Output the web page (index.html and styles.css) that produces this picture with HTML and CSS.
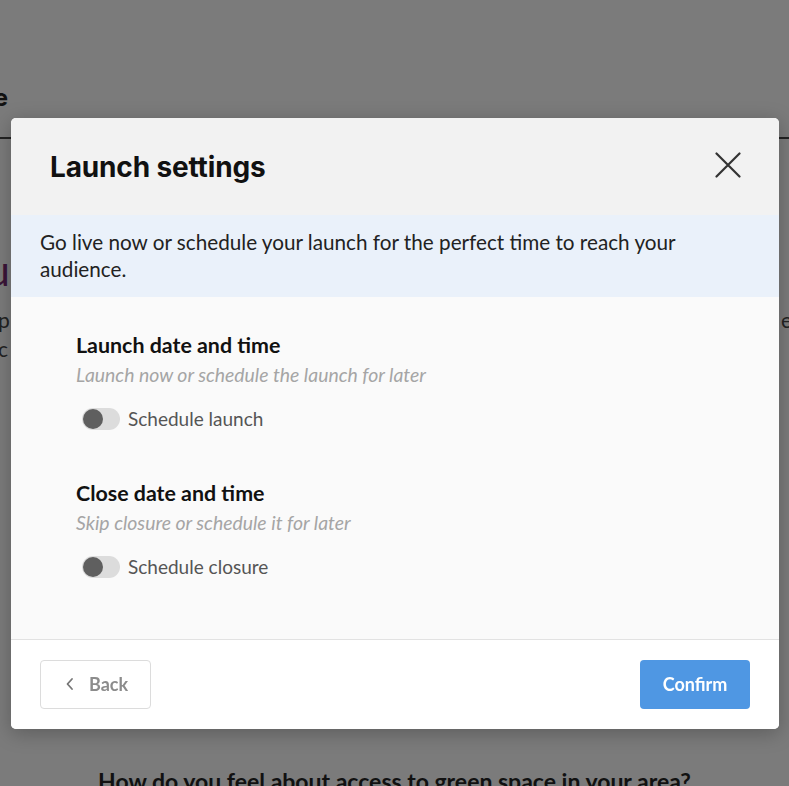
FILE: index.html
```html
<!DOCTYPE html>
<html lang="en">
<head>
<meta charset="utf-8">
<title>Launch settings</title>
<link rel="stylesheet" href="styles.css">
</head>
<body>
<div class="page">
  <div class="page-title"><span>Page title e</span></div>
  <div class="page-rule"></div>
  <div class="page-brand"><span>Su</span></div>
  <div class="page-lines">
    <div class="pl-row"><span class="pl-left">p</span><span class="pl-right">e</span></div>
    <div class="pl-row"><span class="pl-left">c</span></div>
  </div>
  <div class="page-question">How do you feel about access to green space in your area?</div>
</div>

<div class="modal" role="dialog" aria-labelledby="mtitle">
  <header class="modal-header">
    <h1 id="mtitle" class="modal-title">Launch settings</h1>
    <button class="close-btn" aria-label="Close">
      <svg width="26" height="26" viewBox="0 0 26 26"><path d="M1.5 1.5 L24.5 24.5 M24.5 1.5 L1.5 24.5" stroke="#333" stroke-width="2.2" fill="none" stroke-linecap="round"/></svg>
    </button>
  </header>
  <div class="banner">Go live now or schedule your launch for the perfect time to reach your audience.</div>
  <div class="modal-body">
    <section class="setting">
      <h2 class="setting-title">Launch date and time</h2>
      <p class="setting-sub">Launch now or schedule the launch for later</p>
      <label class="toggle-row"><span class="toggle"><span class="knob"></span></span><span class="toggle-label">Schedule launch</span></label>
    </section>
    <section class="setting">
      <h2 class="setting-title">Close date and time</h2>
      <p class="setting-sub">Skip closure or schedule it for later</p>
      <label class="toggle-row"><span class="toggle"><span class="knob"></span></span><span class="toggle-label">Schedule closure</span></label>
    </section>
  </div>
  <footer class="modal-footer">
    <button class="btn btn-back"><svg width="10" height="14" viewBox="0 0 10 14"><path d="M7 2 L2.5 7 L7 12" stroke="#777" stroke-width="1.8" fill="none" stroke-linecap="round" stroke-linejoin="round"/></svg><span>Back</span></button>
    <button class="btn btn-confirm">Confirm</button>
  </footer>
</div>
</body>
</html>
```
FILE: styles.css
```css
* { box-sizing: border-box; }
html, body { margin: 0; padding: 0; }
body {
  width: 789px;
  height: 786px;
  overflow: hidden;
  background: #7b7b7b;
  font-family: Lato, "Noto Sans", sans-serif;
}
.page {
  height: 786px;
  display: flex;
  flex-direction: column;
}
.page-title {
  margin-top: 84px;
  margin-left: -200px;
  width: 208px;
  text-align: right;
  font-family: Inter, sans-serif;
  font-weight: 700;
  font-size: 24px;
  line-height: 28px;
  color: #111;
  white-space: nowrap;
  overflow: hidden;
  direction: rtl;
}
.page-rule {
  margin-top: 25px;
  height: 2px;
  background: #222;
}
.page-brand {
  margin-top: 110px;
  margin-left: -100px;
  width: 110px;
  text-align: right;
  font-size: 42px;
  line-height: 42px;
  color: #3a1538;
  direction: rtl;
  overflow: hidden;
}
.page-lines {
  margin-top: 14px;
  font-size: 21px;
  line-height: 29px;
  color: #222;
}
.pl-row { display: flex; justify-content: space-between; }
.pl-left { margin-left: -2px; }
.pl-right { margin-right: -3px; }
.page-question {
  margin-top: auto;
  margin-bottom: -8px;
  text-align: center;
  font-weight: 700;
  font-size: 23px;
  line-height: 26px;
  color: #111;
}

.modal {
  position: fixed;
  top: 118px;
  left: 11px;
  width: 768px;
  height: 611px;
  border-radius: 5px;
  overflow: hidden;
  display: flex;
  flex-direction: column;
  background: #fafafa;
  box-shadow: 0 4px 20px rgba(0,0,0,0.25);
}
.modal-header {
  height: 97px;
  flex: none;
  background: #f2f2f2;
  display: flex;
  align-items: center;
  justify-content: space-between;
  padding: 0 38px 4px 39px;
}
.modal-title {
  margin: 0;
  font-family: Inter, sans-serif;
  font-weight: 700;
  font-size: 28px;
  line-height: 34px;
  padding-top: 4px;
  color: #111;
  letter-spacing: -0.15px;
}
.close-btn {
  background: none;
  border: 0;
  padding: 0;
  width: 26px;
  height: 26px;
  display: flex;
  cursor: pointer;
}
.banner {
  flex: none;
  height: 82px;
  background: #eaf1fa;
  padding: 14px 29px;
  font-size: 20.7px;
  line-height: 27px;
  color: #222;
}
.modal-body {
  flex: 1;
  background: #fafafa;
  padding: 35px 65px 0;
  display: flex;
  flex-direction: column;
  gap: 49px;
}
.setting { display: flex; flex-direction: column; }
.setting-title {
  margin: 0;
  font-size: 21.4px;
  line-height: 26px;
  font-weight: 700;
  color: #111;
}
.setting-sub {
  margin: 5px 0 0;
  font-size: 19.4px;
  line-height: 24px;
  font-style: italic;
  color: #a5a5a5;
}
.toggle-row {
  margin-top: 20px;
  display: flex;
  align-items: center;
  gap: 8px;
  padding-left: 6px;
}
.toggle {
  width: 38px;
  height: 22px;
  border-radius: 11px;
  background: #dcdcdc;
  display: flex;
  align-items: center;
  padding-left: 1px;
}
.knob {
  width: 20px;
  height: 20px;
  border-radius: 50%;
  background: #5f5f5f;
}
.toggle-label {
  font-size: 19px;
  line-height: 24px;
  color: #555;
}
.modal-footer {
  height: 90px;
  flex: none;
  background: #fff;
  border-top: 1px solid #e2e2e2;
  display: flex;
  align-items: center;
  justify-content: space-between;
  padding: 0 29px 1px 29px;
}
.btn {
  font-family: Lato, "Noto Sans", sans-serif;
  font-size: 18px;
  font-weight: 700;
  border-radius: 4px;
  height: 49px;
  cursor: pointer;
}
.btn-back {
  width: 111px;
  background: #fff;
  border: 1px solid #dcdcdc;
  color: #8c8c8c;
  display: flex;
  align-items: center;
  justify-content: center;
  gap: 14px;
  padding-right: 4px;
}
.btn-confirm {
  width: 110px;
  background: #4f97e3;
  border: 0;
  color: #fff;
}
```
